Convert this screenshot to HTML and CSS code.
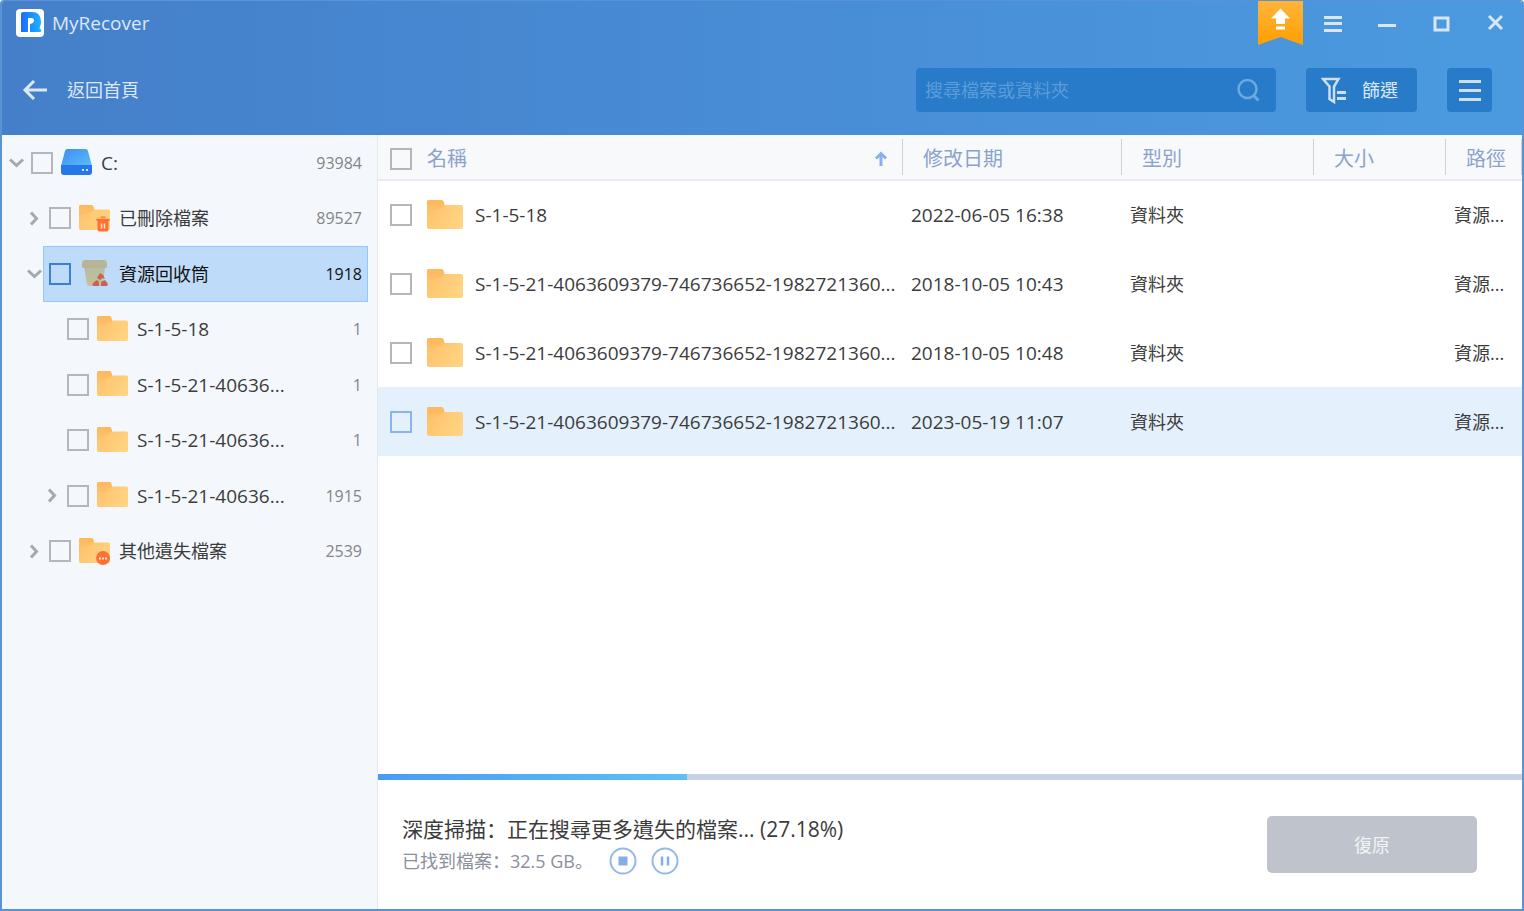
FILE: index.html
```html
<!DOCTYPE html>
<html lang="zh-Hant">
<head>
<meta charset="utf-8">
<title>MyRecover</title>
<link rel="stylesheet" href="styles.css">
</head>
<body>
<svg class="defs" aria-hidden="true">
  <defs>
    <linearGradient id="g-folder" x1="0" y1="0" x2="1" y2="0.5"><stop offset="0" stop-color="#ffbf69"/><stop offset="1" stop-color="#ffd380"/></linearGradient>
    <linearGradient id="g-tab" x1="0" y1="0" x2="0" y2="1"><stop offset="0" stop-color="#ffb85c"/><stop offset="1" stop-color="#ffc16c"/></linearGradient>
    <linearGradient id="g-disk" x1="0" y1="0" x2="1" y2="1"><stop offset="0" stop-color="#3d8df0"/><stop offset="1" stop-color="#5cc2fb"/></linearGradient>
    <linearGradient id="g-logo" x1="0" y1="0" x2="1" y2="0"><stop offset="0" stop-color="#1d6bff"/><stop offset="1" stop-color="#1fb4ff"/></linearGradient>
    <linearGradient id="g-ribbon" x1="0" y1="0" x2="0" y2="1"><stop offset="0" stop-color="#ffb43c"/><stop offset="1" stop-color="#ff9e00"/></linearGradient>
    <linearGradient id="g-bin" x1="0" y1="0" x2="0" y2="1"><stop offset="0" stop-color="#b5bca2"/><stop offset="1" stop-color="#c9c096"/></linearGradient>
    <symbol id="folder" viewBox="0 0 36 30">
      <path d="M2 0h12.500q2 0 2.300 2.500l.7 2.500H34q2 0 2 2v20q0 2-2 2H2q-2 0-2-2V2q0-2 2-2z" fill="url(#g-folder)"/>
      <path d="M2 0h12.500q2 0 2.300 2.500l.7 2.500Q14 10 0 12V2q0-2 2-2z" fill="url(#g-tab)"/>
    </symbol>
    <symbol id="right" viewBox="0 0 17 17"><path d="M5 2.500l5.500 6-5.500 6" fill="none" stroke="#a3a9b1" stroke-width="3"/></symbol>
    <symbol id="down" viewBox="0 0 17 17"><path d="M2 5.500l6.500 6 6.500-6" fill="none" stroke="#a3a9b1" stroke-width="3"/></symbol>
  </defs>
</svg>
<div class="window">
  <header class="header">
    <div class="titlebar">
      <svg class="logo" viewBox="0 0 28 28" aria-hidden="true"><rect width="28" height="28" rx="4" fill="#fff"/><path d="M7 3h9q9 0 9 9.500 0 3.500-1.500 6.500l2 2.500q-.500 2-2.500 1.500h-9v-8q4-1 4-3.500 0-2.500-3-2.500h-3V23H5V5q0-2 2-2z" fill="url(#g-logo)"/></svg>
      <h1 class="brand">MyRecover</h1>
      <button class="ribbon" aria-label="升級"><svg viewBox="0 0 45 44"><path d="M0 0h45v44l-22.500-8L0 44z" fill="url(#g-ribbon)"/><path d="M22.500 7.500L32 17.500h-5V23h-9v-5.500h-5zM18 25.500h9v3h-9z" fill="#fff"/></svg></button>
      <button class="wbtn" aria-label="選單"><svg viewBox="0 0 54 46"><path d="M18 16.500h18M18 22.500h18M18 29.500h18" stroke="#d9e6f6" stroke-width="3"/></svg></button>
      <button class="wbtn" aria-label="最小化"><svg viewBox="0 0 54 46"><path d="M18 24.500h18" stroke="#d9e6f6" stroke-width="3"/></svg></button>
      <button class="wbtn" aria-label="最大化"><svg viewBox="0 0 54 46"><rect x="21" y="17" width="13" height="12" fill="none" stroke="#d9e6f6" stroke-width="3"/></svg></button>
      <button class="wbtn" aria-label="關閉"><svg viewBox="0 0 54 46"><path d="M21 15l13 13M34 15l-13 13" stroke="#d9e6f6" stroke-width="3"/></svg></button>
    </div>
    <div class="toolbar">
      <button class="back"><svg viewBox="0 0 26 22" aria-hidden="true"><path d="M25 11H3M12 2l-9 9 9 9" fill="none" stroke="#dce8f7" stroke-width="3"/></svg>返回首頁</button>
      <div class="search">
        <input type="search" placeholder="搜尋檔案或資料夾" aria-label="搜尋檔案或資料夾">
        <svg viewBox="0 0 26 26" aria-hidden="true"><circle cx="12.500" cy="12" r="9" fill="none" stroke="#6aa9e2" stroke-width="2.500"/><path d="M18.500 18.500l5 5" stroke="#6aa9e2" stroke-width="3"/></svg>
      </div>
      <button class="filter"><svg viewBox="0 0 26 30" aria-hidden="true"><path d="M2 4h15.500l-4.500 7.500v15.500l-4.500-3V11.500z" fill="none" stroke="#cfdff2" stroke-width="2.500"/><path d="M16 17.500h9M16 23.500h9" stroke="#cfdff2" stroke-width="3"/></svg>篩選</button>
      <button class="view" aria-label="檢視"><svg viewBox="0 0 45 44"><path d="M12 13.500h22M12 22.500h22M12 31.500h22" stroke="#cfdff2" stroke-width="3"/></svg></button>
    </div>
  </header>
  <div class="body">
    <nav class="sidebar" aria-label="資料夾">
      <ul class="tree">
        <li class="row"><svg class="chev"><use href="#down"/></svg><div class="entry"><input type="checkbox" id="t1"><svg class="icon" viewBox="0 0 31 27"><path d="M4 2q.500-2 2.500-2h18q2 0 2.500 2l4 15v3H0v-3z" fill="url(#g-disk)"/><path d="M0 16h31v7q0 3-3 3H3q-3 0-3-3z" fill="#2678e8"/><path d="M21 20h2v2h-2zM25 20h2v2h-2z" fill="#cfe4ff"/></svg><label for="t1">C:</label><span class="count">93984</span></div></li>
        <li class="row l1"><svg class="chev"><use href="#right"/></svg><div class="entry"><input type="checkbox" id="t2"><svg class="icon" viewBox="0 0 31 27"><use href="#folder" width="31" height="26"/><path d="M17.500 13.500h4v-2h5v2h4v2.500h-1v8.500q0 2-2 2h-7q-2 0-2-2V16h-1z" fill="#ff7033"/><path d="M18 13.200h12" stroke="#ffcb78" stroke-width="1"/><path d="M22.500 18.500v5M25.500 18.500v5" stroke="#ffe0cf" stroke-width="1.500"/></svg><label class="cjk" for="t2">已刪除檔案</label><span class="count">89527</span></div></li>
        <li class="row l1 selected"><svg class="chev"><use href="#down"/></svg><div class="entry"><input type="checkbox" id="t3"><svg class="icon" viewBox="0 0 31 27"><path d="M5 7h21l-2 17q0 2-2 2H10q-2 0-2-2z" fill="url(#g-bin)"/><path d="M6 0h19q3 0 3 4v3q0 1-2 1H5Q3 8 3 7V4q0-4 3-4z" fill="#b8b597"/><path d="M18 18l3-5 3 2 2 4-3-1-2 2zM15 22l3-2 2 2v4h-5l-2-1zM22 22l4-2 3 4-1 2h-6z" fill="#c4635b"/></svg><label class="cjk" for="t3">資源回收筒</label><span class="count">1918</span></div></li>
        <li class="row l2"><svg class="chev"></svg><div class="entry"><input type="checkbox" id="t4"><svg class="icon" viewBox="0 0 31 27"><use href="#folder" width="31" height="26"/></svg><label for="t4">S-1-5-18</label><span class="count">1</span></div></li>
        <li class="row l2"><svg class="chev"></svg><div class="entry"><input type="checkbox" id="t5"><svg class="icon" viewBox="0 0 31 27"><use href="#folder" width="31" height="26"/></svg><label for="t5">S-1-5-21-40636...</label><span class="count">1</span></div></li>
        <li class="row l2"><svg class="chev"></svg><div class="entry"><input type="checkbox" id="t6"><svg class="icon" viewBox="0 0 31 27"><use href="#folder" width="31" height="26"/></svg><label for="t6">S-1-5-21-40636...</label><span class="count">1</span></div></li>
        <li class="row l2"><svg class="chev"><use href="#right"/></svg><div class="entry"><input type="checkbox" id="t7"><svg class="icon" viewBox="0 0 31 27"><use href="#folder" width="31" height="26"/></svg><label for="t7">S-1-5-21-40636...</label><span class="count">1915</span></div></li>
        <li class="row l1"><svg class="chev"><use href="#right"/></svg><div class="entry"><input type="checkbox" id="t8"><svg class="icon" viewBox="0 0 31 27"><use href="#folder" width="31" height="26"/><circle cx="24" cy="20" r="7" fill="#ff7033"/><path d="M20 19.500h2v2h-2zM23 19.500h2v2h-2zM26 19.500h2v2h-2z" fill="#ffe0cf"/></svg><label class="cjk" for="t8">其他遺失檔案</label><span class="count">2539</span></div></li>
      </ul>
    </nav>
    <main class="main">
      <div class="files">
        <table class="table">
          <colgroup><col><col class="c-date"><col class="c-type"><col class="c-size"><col class="c-path"></colgroup>
          <thead><tr>
            <th scope="col"><div class="head name"><input type="checkbox" aria-label="全選"><span>名稱</span><svg class="sort" viewBox="0 0 14 16" aria-hidden="true"><path d="M7 15V3M2 7.500l5-5 5 5" fill="none" stroke="#86b1ea" stroke-width="3"/></svg></div></th>
            <th scope="col"><div class="head">修改日期</div></th>
            <th scope="col"><div class="head">型別</div></th>
            <th scope="col"><div class="head">大小</div></th>
            <th scope="col"><div class="head">路徑</div></th>
          </tr></thead>
          <tbody>
            <tr><td><div class="file"><input type="checkbox" id="f1"><svg class="folder"><use href="#folder"/></svg><label for="f1">S-1-5-18</label></div></td><td>2022-06-05 16:38</td><td class="cjk">資料夾</td><td></td><td class="cjk">資源...</td></tr>
            <tr><td><div class="file"><input type="checkbox" id="f2"><svg class="folder"><use href="#folder"/></svg><label for="f2">S-1-5-21-4063609379-746736652-1982721360...</label></div></td><td>2018-10-05 10:43</td><td class="cjk">資料夾</td><td></td><td class="cjk">資源...</td></tr>
            <tr><td><div class="file"><input type="checkbox" id="f3"><svg class="folder"><use href="#folder"/></svg><label for="f3">S-1-5-21-4063609379-746736652-1982721360...</label></div></td><td>2018-10-05 10:48</td><td class="cjk">資料夾</td><td></td><td class="cjk">資源...</td></tr>
            <tr class="active"><td><div class="file"><input type="checkbox" id="f4"><svg class="folder"><use href="#folder"/></svg><label for="f4">S-1-5-21-4063609379-746736652-1982721360...</label></div></td><td>2023-05-19 11:07</td><td class="cjk">資料夾</td><td></td><td class="cjk">資源...</td></tr>
          </tbody>
        </table>
      </div>
      <progress class="progress" max="100" value="27" aria-label="掃描進度"></progress>
      <footer class="footer">
        <div class="status">
          <p class="scan">深度掃描<span class="punct" lang="zh-Hans">：</span>正在搜尋更多遺失的檔案... (27.18%)</p>
          <div class="found">
            <p>已找到檔案<span class="punct" lang="zh-Hans">：</span>32.5 GB<span class="punct" lang="zh-Hans">。</span></p>
            <button aria-label="停止"><svg viewBox="0 0 28 28"><circle cx="14" cy="14" r="12.500" fill="none" stroke="#93b8ec" stroke-width="2"/><path d="M9.500 9.500h9v9h-9z" fill="#86aee6"/></svg></button>
            <button aria-label="暫停"><svg viewBox="0 0 28 28"><circle cx="14" cy="14" r="12.500" fill="none" stroke="#93b8ec" stroke-width="2"/><path d="M11 9.500v9M17 9.500v9" stroke="#86aee6" stroke-width="2.500"/></svg></button>
          </div>
        </div>
        <button class="recover" disabled>復原</button>
      </footer>
    </main>
  </div>
</div>
</body>
</html>
```

FILE: styles.css
```css
* { box-sizing: border-box; }
body {
  margin: 0;
  background: #fff;
  color: #3c3c3c;
  font: 19px/26px "Open Sans", "Noto Sans CJK TC", sans-serif;
}
p, h1, ul { margin: 0; padding: 0; }
ul { list-style: none; }
button {
  border: 0;
  padding: 0;
  background: none;
  color: inherit;
  font: inherit;
}
svg { display: block; flex: none; }
.defs { position: absolute; width: 0; height: 0; }
.cjk { font-size: 18px; }

.window {
  display: flex;
  flex-direction: column;
  min-height: 100vh;
  border: 2px solid #5a93d3;
  border-top-width: 1px;
  border-radius: 4px 4px 0 0;
  overflow: hidden;
}

.header {
  padding-bottom: 2px;
  background: linear-gradient(90deg, #457fca, #4b9ae0);
  color: #dce8f7;
}
.titlebar { display: flex; height: 46px; padding-left: 14px; }
.logo { width: 28px; height: 28px; margin-top: 8px; }
.brand {
  flex: 1;
  margin-left: 8px;
  font-size: 19px;
  font-weight: 400;
  line-height: 44px;
}
.ribbon { width: 45px; height: 44px; margin-right: 3px; }
.ribbon svg { width: 45px; height: 44px; }
.wbtn, .wbtn svg { width: 54px; height: 46px; }
.toolbar {
  display: flex;
  align-items: center;
  height: 86px;
  padding: 0 30px 0 20px;
  font-size: 18px;
}
.back { display: flex; align-items: center; gap: 19px; margin-right: auto; }
.back svg { width: 26px; height: 22px; }
.search {
  display: flex;
  align-items: center;
  width: 360px;
  height: 44px;
  padding: 0 15px 0 9px;
  border-radius: 4px;
  background: #277bc8;
}
.search input {
  flex: 1;
  min-width: 0;
  padding: 0;
  border: 0;
  outline: 0;
  background: none;
  color: #fff;
  font: inherit;
}
.search input::placeholder { color: #5b9dda; opacity: 1; }
.search svg { width: 26px; height: 26px; }
.filter {
  display: flex;
  align-items: center;
  gap: 15px;
  width: 111px;
  height: 44px;
  margin: 0 30px;
  padding-left: 15px;
  border-radius: 4px;
  background: #277bc8;
}
.filter svg { width: 26px; height: 30px; }
.view { width: 45px; height: 44px; border-radius: 4px; background: #277bc8; }
.view svg { width: 45px; height: 44px; }

input[type="checkbox"] {
  flex: none;
  appearance: none;
  width: 22px;
  height: 22px;
  margin: 0;
  border: 2px solid #b4b6b8;
  background: transparent;
}

.body { display: flex; flex: 1; }
.sidebar {
  width: 376px;
  border-right: 1px solid #e4e9f1;
  background: #f4f8fd;
}
.tree {
  display: grid;
  grid-auto-rows: 1fr;
  height: 444px;
  padding: 0 9px 0 6px;
}
.row { display: flex; align-items: center; }
.l1 { padding-left: 18px; }
.l2 { padding-left: 36px; }
.chev { width: 17px; height: 17px; }
.entry {
  display: flex;
  flex: 1;
  align-items: center;
  align-self: stretch;
  padding: 0 5px;
  border: 1px solid transparent;
}
.icon { width: 31px; height: 27px; margin: 0 9px 0 8px; }
.count { margin-left: auto; color: #858585; font-size: 16px; }
.selected .entry { border-color: #92c8fb; background: #bedbf9; color: #111; }
.selected .count { color: #111; }
.selected input[type="checkbox"] { border-color: #3a7fd6; }

.main { display: flex; flex: 1; flex-direction: column; min-width: 0; background: #fff; }
.files { flex: 1; }
.table { width: 100%; table-layout: fixed; border-collapse: collapse; }
.c-date { width: 219px; }
.c-type { width: 192px; }
.c-size { width: 132px; }
.c-path { width: 76px; }
.table th {
  height: 45px;
  padding: 0;
  border-bottom: 2px solid #e8ebf1;
  background: #f7f9fb;
  color: #8ba3cb;
  font-size: 20px;
  font-weight: 400;
  text-align: left;
  white-space: nowrap;
}
.head {
  height: 36px;
  padding: 4px 0 0 20px;
  border-right: 1px solid #ccd1d9;
  line-height: 32px;
}
.name, .file { display: flex; align-items: center; padding-left: 12px; }
.name { gap: 15px; }
.sort { width: 14px; height: 16px; margin: 0 14px 0 auto; }
.table td { height: 69px; padding: 0 0 0 8px; white-space: nowrap; }
.table td:first-child { padding: 0; }
.folder { width: 36px; height: 30px; margin: 0 12px 0 15px; }
.active { background: #e4f1fc; }
.active input[type="checkbox"] { border-color: #8ab4ea; }

.progress {
  display: block;
  appearance: none;
  width: 100%;
  height: 6px;
  border: 0;
}
.progress::-webkit-progress-bar { background: #c6d2e6; }
.progress::-webkit-progress-value { background: linear-gradient(90deg, #479cf5, #5dc1f5); }
.footer {
  display: flex;
  align-items: center;
  justify-content: space-between;
  height: 129px;
  padding: 0 45px 0 24px;
}
.status { padding-bottom: 4px; }
.scan { font-size: 21px; line-height: 36px; }
.found { display: flex; align-items: center; color: #8c909c; font-size: 18px; }
.found p { margin-right: 16px; }
.found button { margin-right: 14px; }
.found svg { width: 28px; height: 28px; }
.punct { font-family: "Noto Sans CJK SC", sans-serif; line-height: 1; }
.recover {
  width: 210px;
  height: 57px;
  border-radius: 5px;
  background: #bfc4cc;
  color: #f2f3f5;
  font-size: 18px;
}
```
